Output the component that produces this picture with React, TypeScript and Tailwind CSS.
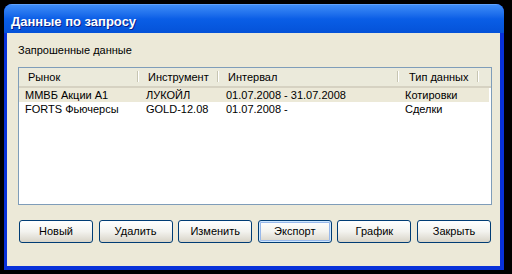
const rows = [
  { market: "ММВБ Акции А1", tool: "ЛУКОЙЛ", range: "01.07.2008 - 31.07.2008", kind: "Котировки", selected: true },
  { market: "FORTS Фьючерсы", tool: "GOLD-12.08", range: "01.07.2008 -", kind: "Сделки", selected: false },
];

const buttons = ["Новый", "Удалить", "Изменить", "Экспорт", "График", "Закрыть"];

function HeaderCell({ label, width }: { label: string; width: string }) {
  return (
    <div className={`${width} relative flex items-center h-full pl-[9px]`}>
      <span>{label}</span>
      <div className="absolute right-0 top-[3px] bottom-[4px] w-[2px] flex">
        <div className="w-px bg-[#c7c5b2]" />
        <div className="w-px bg-white" />
      </div>
    </div>
  );
}

export default function App() {
  return (
    <div
      className="w-[512px] h-[274px] bg-black pt-[4px] pl-[4px] overflow-hidden text-[11px] text-black"
      style={{ fontFamily: '"Liberation Sans", Arial, sans-serif' }}
    >
      <div className="w-[500px] h-[266px] flex flex-col rounded-t-[8px] bg-[#0831d9] overflow-hidden">
        {/* title bar */}
        <div className="h-[29px] shrink-0 flex items-center pl-[7px] pt-[5px] bg-gradient-to-b from-[#3d8cf7] via-[#0a5ee6] to-[#0552d8] border-t border-[#5fa3ff]">
          <span className="text-white font-bold text-[13px] [text-shadow:1px_1px_0_#0a1f8a]">Данные по запросу</span>
        </div>

        {/* body */}
        <div className="flex-1 ml-[3px] mr-[4px] mb-[4px] bg-[#ece9d8] flex flex-col pl-[11px] pt-[11px]">
          <div className="h-[13px] leading-[13px]">Запрошенные данные</div>

          <div className="mt-[10px] w-[474px] h-[138px] border border-[#7f9db9] bg-white flex flex-col">
            <div className="h-[20px] flex bg-[#ebeadb] border-b-2 border-[#d6d2c2]">
              <HeaderCell label="Рынок" width="w-[120px]" />
              <HeaderCell label="Инструмент" width="w-[80px]" />
              <HeaderCell label="Интервал" width="w-[180px]" />
              <div className="w-[80px] relative flex items-center h-full pl-[10px]">
                <span>Тип данных</span>
                <div className="absolute right-0 top-[3px] bottom-[4px] w-[2px] flex">
                  <div className="w-px bg-[#c7c5b2]" />
                  <div className="w-px bg-white" />
                </div>
              </div>
            </div>
            {rows.map((r) => (
              <div
                key={r.market}
                className={`h-[14px] w-[470px] flex items-center leading-[14px] ${r.selected ? "bg-[#ece9d8]" : ""}`}
              >
                <div className="w-[120px] pl-[6px]">{r.market}</div>
                <div className="w-[80px] pl-[7px]">{r.tool}</div>
                <div className="w-[180px] pl-[7px]">{r.range}</div>
                <div className="w-[80px] pl-[6px]">{r.kind}</div>
              </div>
            ))}
          </div>

          <div className="mt-[15px] ml-[1px] w-[472px] flex justify-between">
            {buttons.map((b) => (
              <button
                key={b}
                className={`w-[74px] h-[23px] rounded-[3px] border border-[#003c74] bg-gradient-to-b from-white via-[#f3f3ef] to-[#d8d4c8] flex items-center justify-center ${
                  b === "Экспорт" ? "shadow-[inset_0_0_0_1px_#cee7ff,inset_0_0_0_2px_#98b8ea]" : ""
                }`}
              >
                {b}
              </button>
            ))}
          </div>
        </div>
      </div>
    </div>
  );
}
